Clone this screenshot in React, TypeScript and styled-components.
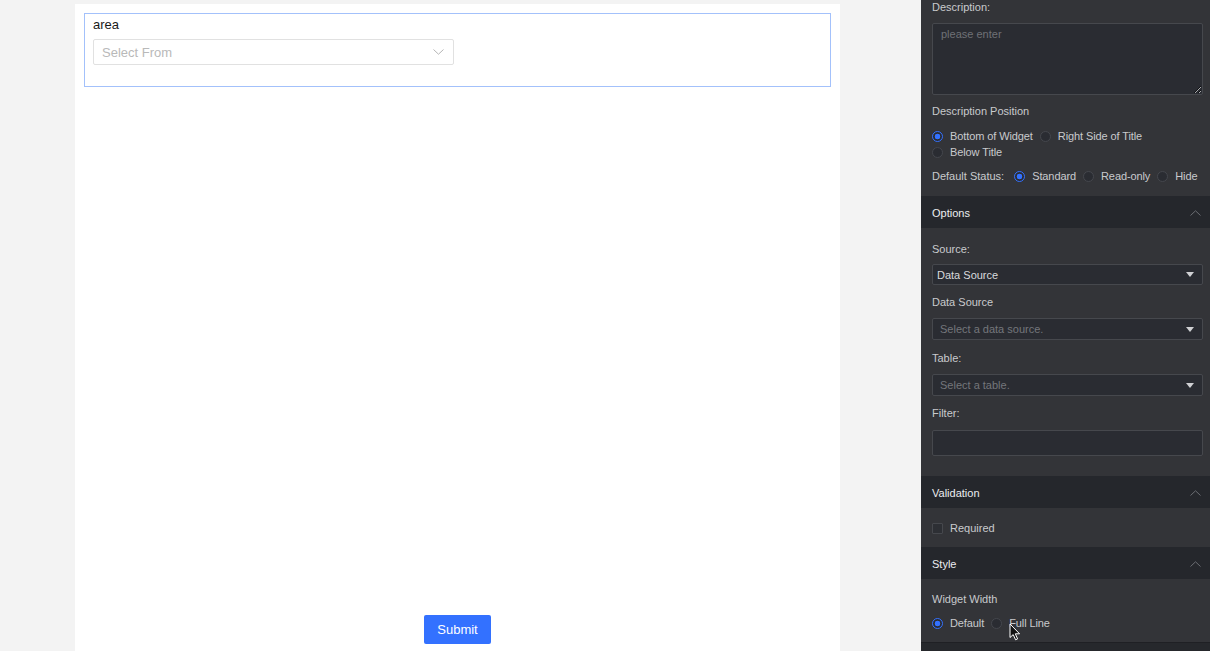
import styled, { createGlobalStyle } from "styled-components";

const GlobalStyle = createGlobalStyle`
  html, body {
    margin: 0;
    padding: 0;
    height: 100%;
    overflow: hidden;
  }
  body {
    font-family: "Liberation Sans", Arial, Helvetica, sans-serif;
    background: #f3f3f3;
  }
  #root {
    height: 100%;
  }
`;

type Option = { label: string; checked?: boolean };

const positionOptions: Option[] = [
  { label: "Bottom of Widget", checked: true },
  { label: "Right Side of Title" },
  { label: "Below Title" },
];

const statusOptions: Option[] = [
  { label: "Standard", checked: true },
  { label: "Read-only" },
  { label: "Hide" },
];

const widthOptions: Option[] = [
  { label: "Default", checked: true },
  { label: "Full Line" },
];

function ChevronUp() {
  return (
    <svg width="11" height="6" viewBox="0 0 11 6" fill="none">
      <path d="M0.5 5.5L5.5 0.8L10.5 5.5" stroke="#6b6d73" strokeWidth="1" />
    </svg>
  );
}

function ChevronDown() {
  return (
    <svg width="11" height="6" viewBox="0 0 11 6" fill="none">
      <path d="M0.5 0.5L5.5 5.2L10.5 0.5" stroke="#b5b5b5" strokeWidth="1" />
    </svg>
  );
}

function Caret() {
  return (
    <svg width="8" height="5" viewBox="0 0 8 5">
      <path d="M0 0H8L4 5Z" fill="#d0d1d4" />
    </svg>
  );
}

function Pointer() {
  return (
    <svg width="12" height="18" viewBox="0 0 12 18">
      <path
        d="M1 1V14.5L4.2 11.6L6.6 16.8L8.6 15.9L6.3 10.8H10.6Z"
        fill="#111"
        stroke="#fff"
        strokeWidth="1"
        strokeLinejoin="round"
      />
    </svg>
  );
}

function RadioGroup({ options, wrap }: { options: Option[]; wrap?: boolean }) {
  return (
    <RadioRow $wrap={wrap}>
      {options.map((o) => (
        <RadioItem key={o.label}>
          <RadioDot $checked={o.checked} />
          {o.label}
        </RadioItem>
      ))}
    </RadioRow>
  );
}

function Section({ title }: { title: string }) {
  return (
    <SectionHeader>
      <span>{title}</span>
      <ChevronUp />
    </SectionHeader>
  );
}

export default function App() {
  return (
    <>
      <GlobalStyle />
      <Layout>
        <Stage>
          <Canvas>
            <FieldBox>
              <FieldLabel>area</FieldLabel>
              <LightSelect>
                <span>Select From</span>
                <ChevronDown />
              </LightSelect>
            </FieldBox>
            <SubmitButton>Submit</SubmitButton>
          </Canvas>
        </Stage>

        <Panel>
          <PanelBody $top={0} $bottom={12}>
            <Label>Description:</Label>
            <TextArea placeholder="please enter" />
            <Label $gap={9}>Description Position</Label>
            <Spaced $top={10}>
              <RadioGroup options={positionOptions} wrap />
            </Spaced>
            <Spaced $top={8}>
              <InlineRow>
                <Label>Default Status:</Label>
                <RadioGroup options={statusOptions} />
              </InlineRow>
            </Spaced>
          </PanelBody>

          <Section title="Options" />
          <PanelBody $top={14} $bottom={20}>
            <Label>Source:</Label>
            <DarkSelect $filled $gap={8}>
              <span>Data Source</span>
              <Caret />
            </DarkSelect>
            <Label $gap={10}>Data Source</Label>
            <DarkSelect $height={22}>
              <span>Select a data source.</span>
              <Caret />
            </DarkSelect>
            <Label $gap={11}>Table:</Label>
            <DarkSelect $height={22}>
              <span>Select a table.</span>
              <Caret />
            </DarkSelect>
            <Label $gap={10}>Filter:</Label>
            <DarkInput />
          </PanelBody>

          <Section title="Validation" />
          <PanelBody $top={13} $bottom={12}>
            <CheckRow>
              <CheckBox />
              Required
            </CheckRow>
          </PanelBody>

          <Section title="Style" />
          <PanelBody $top={13} $bottom={11}>
            <Label>Widget Width</Label>
            <Spaced $top={9}>
              <CursorSpot>
                <RadioGroup options={widthOptions} />
                <CursorMark>
                  <Pointer />
                </CursorMark>
              </CursorSpot>
            </Spaced>
          </PanelBody>
          <PanelFooter />
        </Panel>
      </Layout>
    </>
  );
}

const Layout = styled.div`
  display: flex;
  height: 100%;
`;

const Stage = styled.div`
  flex: 1;
  display: flex;
  padding: 4px 0 0 75px;
`;

const Canvas = styled.div`
  width: 765px;
  background: #fff;
  display: flex;
  flex-direction: column;
  align-items: center;
  padding: 9px 9px 7px;
  box-sizing: border-box;
`;

const FieldBox = styled.div`
  align-self: stretch;
  height: 74px;
  box-sizing: border-box;
  border: 1px solid #a3c1fb;
  padding: 2px 8px 0;
`;

const FieldLabel = styled.div`
  font-size: 13px;
  line-height: 17px;
  color: #1a1a1a;
`;

const LightSelect = styled.div`
  margin-top: 6px;
  width: 361px;
  height: 26px;
  box-sizing: border-box;
  border: 1px solid #e1e1e1;
  border-radius: 2px;
  display: flex;
  align-items: center;
  justify-content: space-between;
  padding: 0 9px 0 8px;
  font-size: 13px;
  color: #b9b9b9;
`;

const SubmitButton = styled.button`
  margin-top: auto;
  width: 67px;
  height: 29px;
  border: none;
  border-radius: 2px;
  background: #3371ff;
  color: #fff;
  font-family: inherit;
  font-size: 13px;
  padding: 0;
`;

const Panel = styled.aside`
  width: 289px;
  background: #333438;
  display: flex;
  flex-direction: column;
  color: #c9cacd;
  font-size: 11px;
`;

const PanelBody = styled.div<{ $top: number; $bottom: number }>`
  padding: ${(p) => p.$top}px 7px ${(p) => p.$bottom}px 11px;
  display: flex;
  flex-direction: column;
`;

const PanelFooter = styled.div`
  flex: 1;
  background: #26282c;
  border-top: 1px solid #1f2024;
`;

const SectionHeader = styled.div`
  height: 32px;
  background: #25272c;
  display: flex;
  align-items: center;
  justify-content: space-between;
  padding: 1px 9px 0 11px;
  box-sizing: border-box;
  font-size: 11px;
  color: #eceef1;
`;

const Label = styled.div<{ $gap?: number }>`
  line-height: 14px;
  margin-top: ${(p) => p.$gap ?? 0}px;
  color: #c9cacd;
  white-space: nowrap;
`;

const Spaced = styled.div<{ $top: number }>`
  margin-top: ${(p) => p.$top}px;
`;

const InlineRow = styled.div`
  display: flex;
  align-items: center;
  gap: 10px;
`;

const TextArea = styled.textarea`
  margin-top: 9px;
  height: 72px;
  box-sizing: border-box;
  background: #2a2c32;
  border: 1px solid #46484d;
  border-radius: 2px;
  padding: 4px 8px;
  font-family: inherit;
  font-size: 11px;
  color: #c9cacd;
  resize: vertical;
  outline: none;

  &::placeholder {
    color: #6f7176;
  }
`;

const RadioRow = styled.div<{ $wrap?: boolean }>`
  display: flex;
  flex-wrap: ${(p) => (p.$wrap ? "wrap" : "nowrap")};
  column-gap: 7px;
  ${(p) => (p.$wrap ? "width: 240px;" : "")}
`;

const RadioItem = styled.label`
  display: flex;
  align-items: center;
  gap: 7px;
  height: 16px;
  white-space: nowrap;
  color: #c9cacd;
  letter-spacing: -0.1px;
`;

const RadioDot = styled.span<{ $checked?: boolean }>`
  width: 11px;
  height: 11px;
  box-sizing: border-box;
  border-radius: 50%;
  border: 1px solid ${(p) => (p.$checked ? "#3371ff" : "#45474d")};
  background: ${(p) =>
    p.$checked
      ? "radial-gradient(circle, #3371ff 0 2.6px, #2a2c32 3.1px)"
      : "#2a2c32"};
  flex-shrink: 0;
`;

const DarkSelect = styled.div<{
  $filled?: boolean;
  $height?: number;
  $gap?: number;
}>`
  margin-top: ${(p) => p.$gap ?? 9}px;
  height: ${(p) => p.$height ?? 21}px;
  box-sizing: border-box;
  background: #2a2c32;
  border: 1px solid #46484d;
  border-radius: 2px;
  display: flex;
  align-items: center;
  justify-content: space-between;
  padding: 0 8px 0 ${(p) => (p.$filled ? 4 : 7)}px;
  color: ${(p) => (p.$filled ? "#d9dadd" : "#74767b")};
`;

const DarkInput = styled.div`
  margin-top: 10px;
  height: 26px;
  box-sizing: border-box;
  background: #2a2c32;
  border: 1px solid #46484d;
  border-radius: 2px;
`;

const CheckRow = styled.label`
  display: flex;
  align-items: center;
  gap: 7px;
  line-height: 14px;
  color: #c9cacd;
`;

const CheckBox = styled.span`
  width: 11px;
  height: 11px;
  box-sizing: border-box;
  border: 1px solid #46484d;
  border-radius: 1px;
  background: #2d2f34;
`;

const CursorSpot = styled.div`
  position: relative;
`;

const CursorMark = styled.span`
  position: absolute;
  left: 77px;
  top: 8px;
  line-height: 0;
`;
